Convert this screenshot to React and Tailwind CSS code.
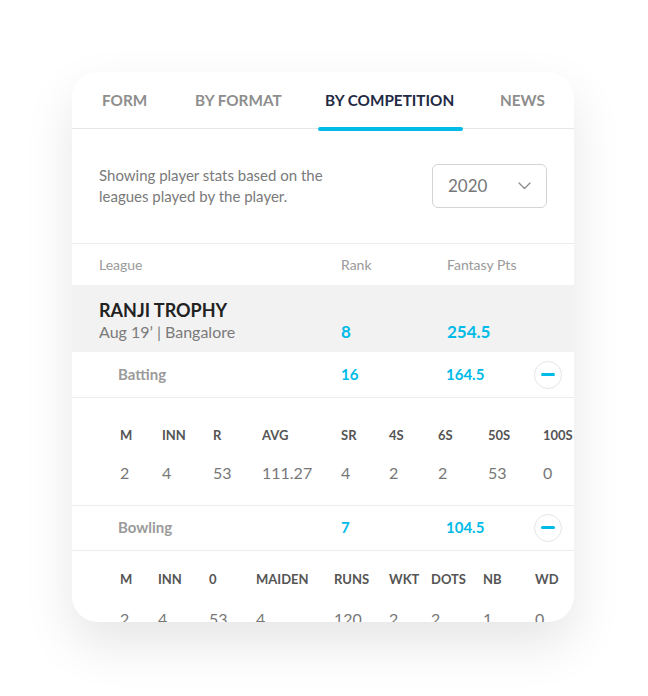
import React from 'react';

const tabs = [
  { label: 'FORM', w: 'w-[93px]' },
  { label: 'BY FORMAT', w: 'w-[130px]' },
  { label: 'BY COMPETITION', w: 'w-[175px]', active: true },
  { label: 'NEWS', w: 'w-[60px]' },
];

const batting = {
  cols: 'grid-cols-[42px_51px_49px_79px_48px_49px_50px_55px_40px]',
  head: ['M', 'INN', 'R', 'AVG', 'SR', '4S', '6S', '50S', '100S'],
  vals: ['2', '4', '53', '111.27', '4', '2', '2', '53', '0'],
};

const bowling = {
  cols: 'grid-cols-[38px_51px_47px_78px_55px_42px_52px_52px_40px]',
  head: ['M', 'INN', '0', 'MAIDEN', 'RUNS', 'WKT', 'DOTS', 'NB', 'WD'],
  vals: ['2', '4', '53', '4', '120', '2', '2', '1', '0'],
};

function Chevron() {
  return (
    <svg width="13" height="8" viewBox="0 0 13 8" fill="none">
      <path d="M1 1l5.5 5.5L12 1" stroke="#8a8a8a" strokeWidth="1.3" strokeLinecap="round" strokeLinejoin="round" />
    </svg>
  );
}

function Minus() {
  return (
    <div className="w-7 h-7 rounded-full border border-[#e6e6e6] flex items-center justify-center">
      <div className="w-[14px] h-[3px] rounded-sm bg-[#00bbe8]" />
    </div>
  );
}

function SubRow({ label, rank, pts, first }) {
  return (
    <div className={`h-[46px] flex items-center border-b border-[#ececec] ${first ? '' : 'border-t'}`}>
      <div className="w-[269px] pl-[46px] text-[15px] font-bold text-[#9a9a9a]">{label}</div>
      <div className="w-[105px] text-[15px] font-bold text-[#00bbe8]">{rank}</div>
      <div className="w-[88px] text-[15px] font-bold text-[#00bbe8]">{pts}</div>
      <Minus />
    </div>
  );
}

function StatTable({ data, headPad, valPad }) {
  return (
    <div className="pl-[48px]">
      <div className={`grid ${data.cols} ${headPad} text-[13px] font-bold text-[#555] whitespace-nowrap`}>
        {data.head.map((h) => (
          <div key={h}>{h}</div>
        ))}
      </div>
      <div className={`grid ${data.cols} ${valPad} text-[16px] text-[#777] whitespace-nowrap`}>
        {data.vals.map((v, i) => (
          <div key={i}>{v}</div>
        ))}
      </div>
    </div>
  );
}

export default function App() {
  return (
    <div className="w-[648px] h-[696px] bg-white pt-[72px] pl-[72px] font-['Lato','Noto_Sans',sans-serif]">
      <div className="w-[502px] h-[550px] rounded-[26px] bg-white overflow-hidden shadow-[0_22px_50px_rgba(0,0,0,0.10)]">
        {/* tabs */}
        <div className="h-[57px] border-b border-[#e6e6e6] flex items-center pl-[30px]">
          {tabs.map((t) => (
            <div
              key={t.label}
              className={`relative h-full shrink-0 flex items-center text-[15.3px] font-bold whitespace-nowrap ${t.w} ${
                t.active ? 'text-[#1f2a44]' : 'text-[#8e8e8e]'
              }`}
            >
              {t.label}
              {t.active && (
                <div className="absolute -left-[7px] w-[145px] bottom-[-3px] h-1 rounded-full bg-[#00bbe8]" />
              )}
            </div>
          ))}
        </div>

        {/* intro */}
        <div className="h-[115px] border-b border-[#ececec] flex items-start pl-[27px] pr-[27px] pt-[36px]">
          <p className="w-[250px] text-[15px] leading-[21px] text-[#7a7a7a]">
            Showing player stats based on the leagues played by the player.
          </p>
          <div className="ml-auto -mt-[1px] w-[115px] h-[44px] rounded-md border border-[#d4d4d4] flex items-center justify-between pl-[15px] pr-[15px]">
            <span className="text-[17px] text-[#777]">2020</span>
            <Chevron />
          </div>
        </div>

        {/* header */}
        <div className="h-[41px] flex items-center text-[14px] text-[#9a9a9a]">
          <div className="w-[269px] pl-[27px]">League</div>
          <div className="w-[106px]">Rank</div>
          <div>Fantasy Pts</div>
        </div>

        {/* league */}
        <div className="h-[67px] bg-[#f2f2f2] flex pl-[27px] pt-[14px]">
          <div className="w-[242px]">
            <div className="text-[18px] leading-[22px] font-bold text-[#222]">RANJI TROPHY</div>
            <div className="text-[16px] leading-[22px] text-[#7a7a7a]">Aug 19’ |&nbsp;Bangalore</div>
          </div>
          <div className="w-[106px] pt-[22px] text-[17px] leading-[22px] font-bold text-[#00bbe8]">8</div>
          <div className="pt-[22px] text-[17px] leading-[22px] font-bold text-[#00bbe8]">254.5</div>
        </div>

        <SubRow label="Batting" rank="16" pts="164.5" first />
        <StatTable data={batting} headPad="pt-[28px]" valPad="pt-[15px] pb-[20px]" />
        <SubRow label="Bowling" rank="7" pts="104.5" />
        <StatTable data={bowling} headPad="pt-[19px]" valPad="pt-[18px]" />
      </div>
    </div>
  );
}
